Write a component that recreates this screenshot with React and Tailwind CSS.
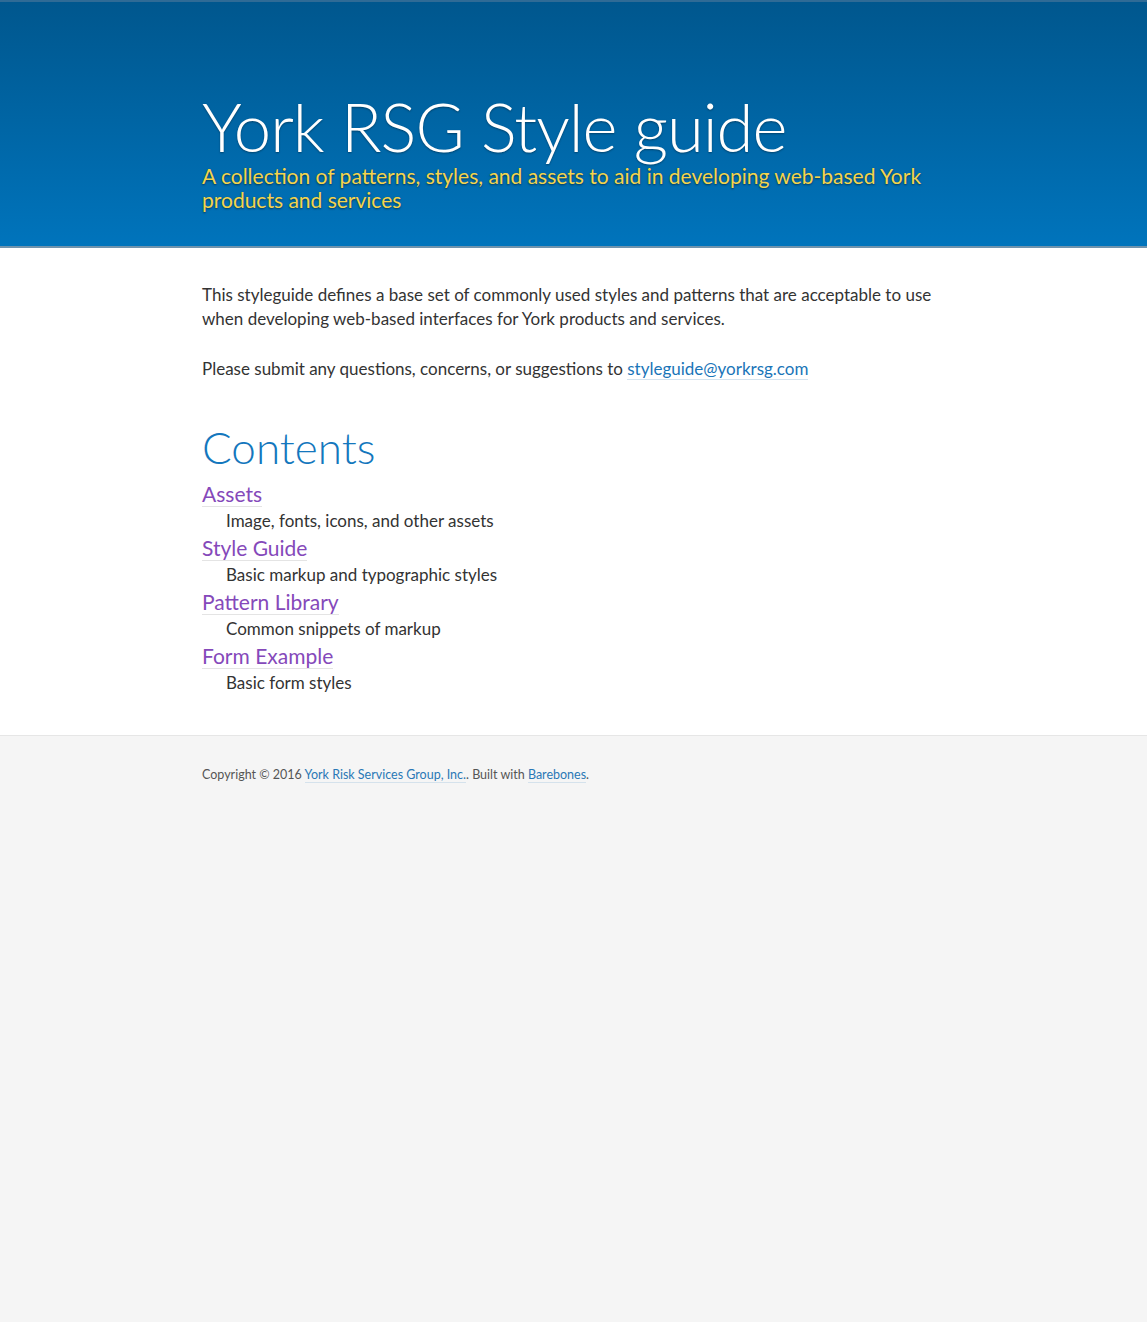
const font = { fontFamily: 'Lato, "Open Sans", sans-serif' };

const contents = [
  { title: 'Assets', desc: 'Image, fonts, icons, and other assets' },
  { title: 'Style Guide', desc: 'Basic markup and typographic styles' },
  { title: 'Pattern Library', desc: 'Common snippets of markup' },
  { title: 'Form Example', desc: 'Basic form styles' },
];

export default function App() {
  return (
    <div className="min-h-[1322px] flex flex-col bg-[#f5f5f5]" style={font}>
      {/* header */}
      <header className="h-[248px] border-t-2 border-[#2f6b96] border-b-2 border-b-[#6f93ad] bg-gradient-to-b from-[#00578e] to-[#0074bc]">
        <div className="w-[743px] mx-auto pt-[86px]">
          <h1 className="text-[67px] leading-[76px] font-light text-white tracking-[-1px] [text-shadow:0_1px_2px_rgba(0,0,0,0.35)]">
            York RSG Style guide
          </h1>
          <p className="text-[21px] leading-[24px] text-[#f4d44c] [text-shadow:0_1px_2px_rgba(0,0,0,0.5)]">
            A collection of patterns, styles, and assets to aid in developing web-based York products and services
          </p>
        </div>
      </header>

      {/* main */}
      <main className="bg-white border-b border-[#e6e6e6]">
        <div className="w-[743px] mx-auto pt-[35px] pb-[39px] text-[#333] text-[17px] leading-[24px]">
          <p>
            This styleguide defines a base set of commonly used styles and patterns that are acceptable to use when developing web-based interfaces for York products and services.
          </p>
          <p className="mt-[26px]">
            Please submit any questions, concerns, or suggestions to{' '}
            <a href="#" className="text-[#1a75b8] border-b border-[#d5e4ef]">styleguide@yorkrsg.com</a>
          </p>

          <h2 className="mt-[40px] text-[44px] leading-[52px] font-light text-[#1477bd]">Contents</h2>
          <dl className="mt-[7px]">
            {contents.map((c) => (
              <div key={c.title}>
                <dt className="text-[21px] leading-[28px]">
                  <a href="#" className="text-[#8549ba] border-b border-[#e4e4e4]">{c.title}</a>
                </dt>
                <dd className="pl-6 leading-[26px]">{c.desc}</dd>
              </div>
            ))}
          </dl>
        </div>
      </main>

      {/* footer */}
      <footer className="flex-1 bg-[#f5f5f5]">
        <div className="w-[743px] mx-auto pt-[30px] text-[12.5px] leading-[18px] text-[#555]">
          Copyright © 2016{' '}
          <a href="#" className="text-[#2a78b6] border-b border-[#d5e2ec]">York Risk Services Group, Inc.</a>. Built with{' '}
          <a href="#" className="text-[#2a78b6] border-b border-[#d5e2ec]">Barebones</a>.
        </div>
      </footer>
    </div>
  );
}
